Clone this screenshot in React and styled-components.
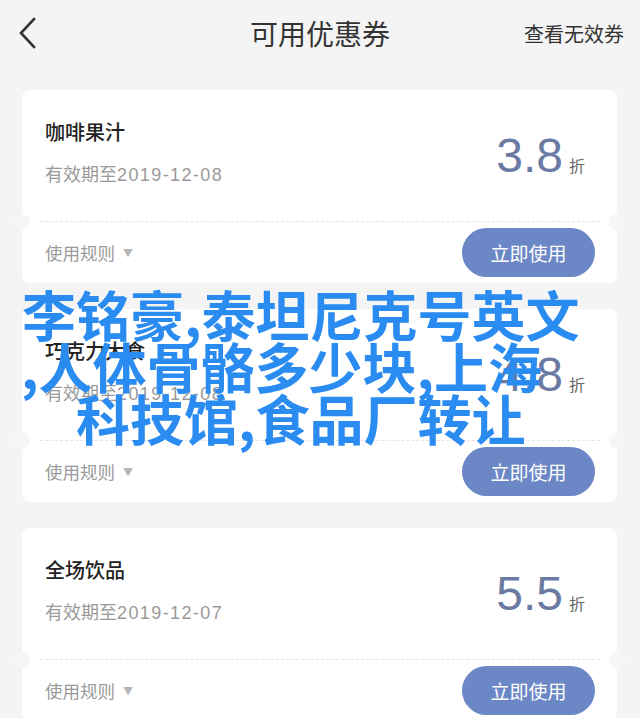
import React from 'react'
import styled, { createGlobalStyle } from 'styled-components'

const GlobalStyle = createGlobalStyle`
  body {
    margin: 0;
    background: #f4f4f4;
    font-family: 'Noto Sans CJK SC', 'Noto Sans', sans-serif;
    -webkit-font-smoothing: antialiased;
  }
`

const Page = styled.div`
  position: relative;
  width: 640px;
  height: 718px;
  overflow: hidden;
  background: #f4f4f4;
`

const NavBar = styled.header`
  height: 66px;
  display: grid;
  grid-template-columns: 1fr auto 1fr;
  align-items: center;
  padding: 0 16px 0 18px;
`

const Back = styled.button`
  justify-self: start;
  display: flex;
  align-items: center;
  padding: 0;
  border: 0;
  background: none;
  color: #333;
`

const NavTitle = styled.h1`
  margin: 0 0 0 -2px;
  font-size: 28px;
  font-weight: 400;
  color: #333;
  line-height: 36px;
`

const NavLink = styled.a`
  justify-self: end;
  font-size: 20px;
  color: #333;
  text-decoration: none;
`

const List = styled.main`
  display: flex;
  flex-direction: column;
  gap: 26px;
  padding: 24px 23px 0 22px;
`

const Card = styled.article`
  background: #fff;
  border-radius: 8px;
  display: flex;
  flex-direction: column;
`

const Top = styled.section`
  height: 131px;
  display: flex;
  align-items: center;
  justify-content: space-between;
  padding: 0 32px 0 23px;
  box-sizing: border-box;
`

const Info = styled.div`
  display: flex;
  flex-direction: column;
  gap: 15px;
  padding-bottom: 6px;
`

const Name = styled.h2`
  margin: 0;
  font-size: 20px;
  line-height: 28px;
  font-weight: 500;
  color: #222;
`

const Expire = styled.p`
  margin: 0;
  font-size: 18px;
  line-height: 24px;
  color: #9a9a9a;
`

const Digits = styled.span`
  font-family: 'Liberation Sans', Arial, sans-serif;
  letter-spacing: 1.4px;
`

const Discount = styled.div`
  display: flex;
  align-items: baseline;
  gap: 6px;
  color: #6a7aa3;
`

const Rate = styled.span`
  font-family: 'Liberation Sans', Arial, sans-serif;
  font-size: 48px;
  line-height: 1;
`

const Unit = styled.span`
  font-size: 16px;
  color: #666;
`

const Divider = styled.div`
  position: relative;
  height: 0;
  margin: 0 17px 0 18px;
  border-top: 1px dashed #e4e4e4;

  &::before,
  &::after {
    content: '';
    position: absolute;
    top: -8px;
    width: 16px;
    height: 16px;
    border-radius: 50%;
    background: #f6f6f6;
  }
  &::before { left: -26px; }
  &::after { right: -25px; }
`

const Bottom = styled.section`
  height: 61px;
  display: flex;
  align-items: center;
  justify-content: space-between;
  padding: 0 22px 0 23px;
`

const Rules = styled.span`
  display: flex;
  align-items: center;
  gap: 8px;
  font-size: 17.5px;
  color: #9a9a9a;
`

const Caret = styled.span`
  font-size: 10px;
  color: #b5b5b5;
`

const UseButton = styled.button`
  width: 133px;
  height: 49px;
  border: 0;
  border-radius: 25px;
  background: #6c87c6;
  color: #fff;
  font-family: inherit;
  font-size: 19px;
`

const Watermark = styled.div`
  position: absolute;
  top: 288px;
  left: 0;
  right: 0;
  pointer-events: none;
  font-size: 54px;
  line-height: 52px;
  font-weight: 700;
  color: #2a8bf0;
  white-space: nowrap;
`

const MarkLine = styled.div`
  padding-left: ${props => props.indent}px;
`

const coupons = [
  { name: '咖啡果汁', expire: '2019-12-08', rate: '3.8' },
  { name: '巧克力大食', expire: '2019-12-08', rate: '4.8' },
  { name: '全场饮品', expire: '2019-12-07', rate: '5.5' },
]

const BackIcon = () => (
  <svg width="18" height="32" viewBox="0 0 18 32" fill="none">
    <path d="M16 2 L3 16 L16 30" stroke="currentColor" strokeWidth="2.6" strokeLinecap="square" />
  </svg>
)

const Coupon = ({ name, expire, rate }) => (
  <Card>
    <Top>
      <Info>
        <Name>{name}</Name>
        <Expire>有效期至<Digits>{expire}</Digits></Expire>
      </Info>
      <Discount>
        <Rate>{rate}</Rate>
        <Unit>折</Unit>
      </Discount>
    </Top>
    <Divider />
    <Bottom>
      <Rules>
        使用规则
        <Caret>▼</Caret>
      </Rules>
      <UseButton>立即使用</UseButton>
    </Bottom>
  </Card>
)

export default function App() {
  return (
    <Page>
      <GlobalStyle />
      <NavBar>
        <Back aria-label="返回"><BackIcon /></Back>
        <NavTitle>可用优惠券</NavTitle>
        <NavLink href="#">查看无效券</NavLink>
      </NavBar>
      <List>
        {coupons.map(c => <Coupon key={c.name} {...c} />)}
      </List>
      <Watermark>
        <MarkLine indent={22}>李铭豪,泰坦尼克号英文</MarkLine>
        <MarkLine indent={21}>,人体骨骼多少块,上海</MarkLine>
        <MarkLine indent={76}>科技馆,食品厂转让</MarkLine>
      </Watermark>
    </Page>
  )
}
